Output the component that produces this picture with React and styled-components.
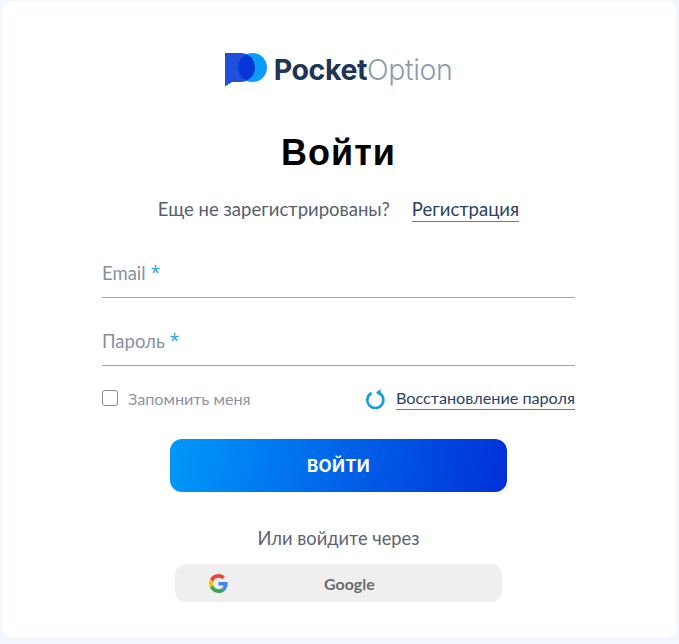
import React from 'react';
import styled, { createGlobalStyle } from 'styled-components';

const GlobalStyle = createGlobalStyle`
  html, body {
    margin: 0;
    padding: 0;
    background: #f1f7fc;
    font-family: "Lato", "Open Sans", sans-serif;
  }
`;

const Page = styled.div`
  width: 679px;
  height: 644px;
  padding: 1px 3px 6px 2px;
  box-sizing: border-box;
  overflow: hidden;
`;

const Card = styled.div`
  height: 100%;
  background: #fff;
  border-radius: 10px;
  display: flex;
  flex-direction: column;
  align-items: center;
  padding: 51px 1px 0 0;
  box-sizing: border-box;
`;

const Logo = styled.div`
  display: flex;
  align-items: center;
  height: 36px;
  gap: 6px;
`;

const LogoText = styled.div`
  font-family: "Inter", sans-serif;
  font-size: 28.500px;
  letter-spacing: -0.4px;
  line-height: 36px;
  color: #8d9bab;
  font-weight: 300;
  b {
    color: #1f3557;
    font-weight: 700;
  }
`;

const Title = styled.h1`
  margin: 42px 0 0;
  font-family: "Liberation Sans", sans-serif;
  font-size: 36px;
  line-height: 46px;
  font-weight: 700;
  letter-spacing: 1px;
  color: #000;
`;

const SignupRow = styled.div`
  margin-top: 21px;
  display: flex;
  align-items: flex-start;
  gap: 22px;
  font-size: 18.500px;
  line-height: 24px;
  color: #555f6e;
`;

const UnderLink = styled.a`
  display: inline-block;
  color: #2a4263;
  border-bottom: 1px solid #0f9be0;
  text-decoration: none;
  font-size: ${p => p.$size || 18.5}px;
  line-height: ${p => (p.$size ? 23 : 24)}px;
`;

const Form = styled.div`
  width: 473px;
  margin-top: 24px;
  display: flex;
  flex-direction: column;
  gap: 16px;
`;

const Field = styled.div`
  height: 52px;
  box-sizing: border-box;
  border-bottom: 1px solid #a6a6a8;
  font-size: 18.500px;
  color: #87919f;
  padding-top: 14px;
  line-height: 24px;
  span {
    color: #2b9fe6;
    font-family: "Open Sans", sans-serif;
    font-size: 18px;
    vertical-align: 1px;
  }
`;

const OptionsRow = styled.div`
  width: 473px;
  margin-top: 20px;
  display: flex;
  align-items: center;
  justify-content: space-between;
`;

const Remember = styled.label`
  display: flex;
  align-items: center;
  gap: 10px;
  font-size: 16.200px;
  color: #8b94a1;
`;

const CheckBox = styled.span`
  width: 14px;
  height: 14px;
  border: 1.5px solid #8a8a8e;
  border-radius: 3px;
  background: #fff;
`;

const Restore = styled.div`
  display: flex;
  align-items: center;
  gap: 11px;
`;

const SubmitButton = styled.button`
  margin-top: 29px;
  width: 337px;
  height: 53px;
  border: 0;
  border-radius: 12px;
  background: linear-gradient(100deg, #0099fa 0%, #0030d8 100%);
  color: #fff;
  font-family: "Inter", sans-serif;
  font-weight: 700;
  font-size: 17px;
  letter-spacing: 0.3px;
`;

const OrText = styled.div`
  margin-top: 34px;
  font-size: 18.300px;
  line-height: 24px;
  color: #5c6470;
`;

const GoogleButton = styled.button`
  margin-top: 14px;
  width: 327px;
  height: 38px;
  border: 0;
  border-radius: 11px;
  background: #efefef;
  padding: 0 0 0 34px;
  display: flex;
  align-items: center;
  font-family: "Lato", sans-serif;
  font-size: 16px;
  font-weight: 700;
  color: #6b6b6b;
  span {
    margin-left: 96px;
  }
`;

const LogoMark = () => (
  <svg width="43" height="36" viewBox="0 0 43 36">
    <path d="M0 1h15.500a14.500 14.500 0 0 1 0 29H7l-7 4.500z" fill="#1f4fdc" />
    <circle cx="27.500" cy="15.500" r="14.500" fill="#0a9bff" />
    <path d="M21.500 2.300A14.500 14.500 0 0 1 21.500 28.700A14.500 14.500 0 0 1 21.500 2.300z" fill="#0637d6" />
  </svg>
);

const RestoreIcon = () => (
  <svg width="20" height="21" viewBox="0 0 20 21" fill="none">
    <path d="M6.500 5a8 8 0 1 0 6.500-.500" stroke="#189ae4" strokeWidth="2.600" />
    <path d="M15.500 1l-4.500 3.500 4.500 3.500z" fill="#189ae4" />
  </svg>
);

const GoogleIcon = () => (
  <svg width="19" height="19" viewBox="0 0 48 48">
    <path fill="#EA4335" d="M24 9.500c3.500 0 6.700 1.200 9.200 3.600l6.900-6.900C35.900 2.400 30.500 0 24 0 14.600 0 6.500 5.400 2.600 13.200l8 6.200C12.400 13.700 17.700 9.500 24 9.500z" />
    <path fill="#4285F4" d="M47 24.500c0-1.600-.1-3.100-.4-4.500H24v9h12.900c-.6 3-2.200 5.500-4.700 7.200l7.700 6C44.400 38.600 47 32.100 47 24.500z" />
    <path fill="#FBBC05" d="M10.500 28.600c-.5-1.400-.8-3-.8-4.600s.3-3.200.8-4.600l-8-6.200C.9 16.500 0 20.100 0 24s.9 7.500 2.600 10.800z" />
    <path fill="#34A853" d="M24 48c6.500 0 11.900-2.100 15.900-5.800l-7.700-6c-2.200 1.400-4.900 2.300-8.200 2.300-6.300 0-11.600-4.200-13.500-9.900l-8 6.200C6.500 42.600 14.600 48 24 48z" />
  </svg>
);

const App = () => (
  <Page>
    <GlobalStyle />
    <Card>
      <Logo>
        <LogoMark />
        <LogoText><b>Pocket</b>Option</LogoText>
      </Logo>
      <Title>Войти</Title>
      <SignupRow>
        <span>Еще не зарегистрированы?</span>
        <UnderLink>Регистрация</UnderLink>
      </SignupRow>
      <Form>
        <Field>Email <span>*</span></Field>
        <Field>Пароль <span>*</span></Field>
      </Form>
      <OptionsRow>
        <Remember><CheckBox />Запомнить меня</Remember>
        <Restore>
          <RestoreIcon />
          <UnderLink $size={16.2}>Восстановление пароля</UnderLink>
        </Restore>
      </OptionsRow>
      <SubmitButton>ВОЙТИ</SubmitButton>
      <OrText>Или войдите через</OrText>
      <GoogleButton>
        <GoogleIcon />
        <span>Google</span>
      </GoogleButton>
    </Card>
  </Page>
);

export default App;
